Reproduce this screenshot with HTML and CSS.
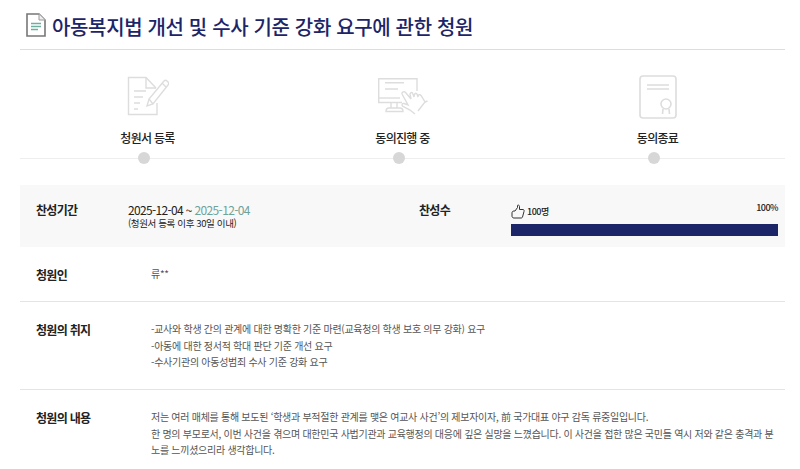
FILE: index.html
```html
<!doctype html>
<html lang="ko">

<head>
    <meta charset="utf-8">
    <title>청원</title>
    <link rel="stylesheet" href="styles.css">
</head>

<body>
<div class="page">
    <!--Title-->
    <h1 class="title">
        <svg class="titleIcon" width="20" height="24" viewBox="0 0 20 24">
            <path d="M1 1H13L19 7V23H1Z" fill="#fff" stroke="#777" stroke-width="1.6"/>
            <path d="M13 1V7H19" fill="#eee" stroke="#999" stroke-width="1"/>
            <path d="M5 10.500H15M5 13.500H15M5 16.500H12" fill="none" stroke="#6fae9e" stroke-width="1.4"/>
        </svg>
        아동복지법 개선 및 수사 기준 강화 요구에 관한 청원
    </h1>

    <!--Steps-->
    <div class="steps">
        <div class="step">
            <svg class="stepIcon" width="42" height="42" viewBox="0 0 42 42">
                <g fill="none" stroke="#ddd" stroke-width="1.4">
                    <path d="M30 27V38.500H1.500V1.500H19L29 12"/>
                    <path d="M19 1.500V12H29"/>
                    <path d="M7 15H19M7 21H16M7 27H13M7 33H11"/>
                    <path d="M20 30L22 23L37 5C38 4 39 4 40 5L41 6C42 7 42 8 41 9L26 28Z"/>
                    <path d="M22 23L26 28M35 7L39 11"/>
                </g>
            </svg>
            <div class="stepName">청원서 등록</div>
            <span class="dot"></span>
        </div>
        <div class="step">
            <svg class="stepIcon" width="50" height="38" viewBox="0 0 50 38">
                <g fill="none" stroke="#ddd" stroke-width="1.4">
                    <path d="M24 24.500H.7V.7H39V13"/>
                    <path d="M.7 20H22"/>
                    <path d="M7 4.700H26M7 11H20"/>
                    <path d="M13 24.500V30M19 24.500V30M8 33.500C8 31 9 30 11 30H22C24 30 25 31 25 33.500Z"/>
                    <path d="M24 16C23.500 13.500 27 13 28 15L33 21L32 16C33 14 34.500 14 35 16L36 19C36 15.500 38 14.500 39 16L40 19C40 16.500 42 16 43 17.500L47 24L40 33"/>
                    <path d="M24 16L30 27L26 25.500C24.500 25 23 27 25 28.500L32 32L37 36M47 24L49.500 23"/>
                </g>
            </svg>
            <div class="stepName">동의진행 중</div>
            <span class="dot"></span>
        </div>
        <div class="step">
            <svg class="stepIcon" width="38" height="44" viewBox="0 0 38 44">
                <g fill="none" stroke="#ddd" stroke-width="1.6">
                    <rect x="1" y="1" width="36" height="42" rx="3"/>
                    <path d="M8 10H30M8 14H30"/>
                    <circle cx="27" cy="29" r="5"/>
                    <path d="M24 34L23.500 39M30 34L30.500 39"/>
                </g>
            </svg>
            <div class="stepName">동의종료</div>
            <span class="dot"></span>
        </div>
    </div>

    <!--Period and signature count-->
    <div class="period">
        <strong class="periodHead">찬성기간</strong>
        <div class="dates">
            <div class="dateRange">2025-12-04 ~ <span class="dateEnd">2025-12-04</span></div>
            <div class="dateNote">(청원서 등록 이후 30일 이내)</div>
        </div>
        <strong class="countHead">찬성수</strong>
        <div class="count">
            <div class="countRow">
                <span class="countNum">
                    <svg width="14" height="15" viewBox="0 0 14 15">
                        <path d="M4 7L6.500 3.500V1.500C6.500 .8 8.500 .8 8.500 2.500V5.500H12C13 5.500 13.300 6.500 13 7.500L11.500 13C11.300 13.700 11 14 10 14H3C1.500 14 1 13 1 12V9C1 8 1.500 7 3 7Z" fill="none" stroke="#333" stroke-width="1"/>
                    </svg>
                    100명
                </span>
                <span class="percent">100%</span>
            </div>
            <div class="bar"><div class="barFill" style="width:100%"></div></div>
        </div>
    </div>

    <!--Details-->
    <div class="row rowName">
        <strong class="rowHead">청원인</strong>
        <div class="rowBody">류**</div>
    </div>
    <div class="row rowAim">
        <strong class="rowHead">청원의 취지</strong>
        <div class="rowBody">
            -교사와 학생 간의 관계에 대한 명확한 기준 마련(교육청의 학생 보호 의무 강화) 요구<br>
            -아동에 대한 정서적 학대 판단 기준 개선 요구<br>
            -수사기관의 아동성범죄 수사 기준 강화 요구
        </div>
    </div>
    <div class="row rowText">
        <strong class="rowHead">청원의 내용</strong>
        <div class="rowBody">
            저는 여러 매체를 통해 보도된 ‘학생과 부적절한 관계를 맺은 여교사 사건’의 제보자이자, 前 국가대표 야구 감독 류중일입니다.<br>
            한 명의 부모로서, 이번 사건을 겪으며 대한민국 사법기관과 교육행정의 대응에 깊은 실망을 느꼈습니다. 이 사건을 접한 많은 국민들 역시 저와 같은 충격과 분노를 느끼셨으리라 생각합니다.
        </div>
    </div>
</div>
</body>

</html>
```

FILE: styles.css
```css
html,body{margin:0; padding:0; background-color:#fff; overflow:hidden;}
body{font-family:"Noto Sans CJK KR","Noto Sans",sans-serif; color:#222; height:469px;}
.page{margin:0 15px 0 20px;}

/*Title*/
.title{display:flex; align-items:center; gap:6px; height:50px; margin:0; padding:4px 0 0 6px; box-sizing:border-box; border-bottom:1px solid #ddd; font-size:20px; font-weight:500; color:#1b2568; letter-spacing:-.35px; white-space:nowrap;}
.titleIcon{margin-top:-4px;}

/*Steps*/
.steps{display:grid; grid-template-columns:repeat(3,1fr); height:109px; border-bottom:1px solid #eee; box-sizing:border-box;}
.step{position:relative; display:flex; flex-direction:column; align-items:center;}
.stepIcon{height:44px; margin-top:25px; box-sizing:border-box;}
.stepName{margin-top:10px; font-size:12px; font-weight:500; line-height:18px; color:#222; letter-spacing:-.7px;}
.dot{position:absolute; left:50%; bottom:-6px; width:12px; height:12px; margin-left:-9.500px; border-radius:50%; background-color:#d7d7d7;}

/*Period*/
.period{display:grid; grid-template-columns:92px 291px 92px 1fr; height:62px; margin-top:26px; padding:0 7px 0 16px; background-color:#f8f8f8;}
.periodHead,.countHead,.rowHead{font-size:12px; font-weight:700; line-height:18px; color:#222; letter-spacing:-.7px;}
.periodHead,.countHead{padding-top:16px;}
.dates{padding-top:17px;}
.dateRange{font-size:12px; line-height:16px; letter-spacing:-.65px;}
.dateEnd{color:#6fa39a;}
.dateNote{font-size:9.500px; line-height:11px; letter-spacing:-.37px;}
.countRow{display:flex; justify-content:space-between; padding-top:17px; height:22px; font-size:9px; font-weight:500; letter-spacing:-.5px;}
.countNum{display:flex; align-items:center; gap:2px; height:18px;}
.percent{line-height:12px;}
.bar{height:12px; background-color:#e9e9e9;}
.barFill{height:100%; background-color:#1b2568;}

/*Details*/
.row{display:grid; grid-template-columns:115px 1fr; padding:0 10px 0 16px; border-bottom:1px solid #e4e4e4; font-size:10px;}
.rowBody{color:#555; line-height:16.600px; font-size:10px; letter-spacing:-.28px; word-break:break-all;}
.rowName{height:55px; padding-top:19px; box-sizing:border-box;}
.rowAim{height:88px; padding-top:19px; box-sizing:border-box;}
.rowText{padding-top:19px; border-bottom:none;}
```
